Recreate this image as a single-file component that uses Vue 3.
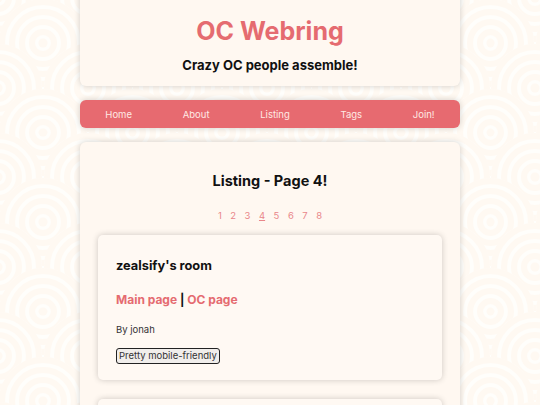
<script setup>
const navLinks = ['Home', 'About', 'Listing', 'Tags', 'Join!']
const pages = [1, 2, 3, 4, 5, 6, 7, 8]
</script>

<template>
  <div class="page">
    <header class="card top-card">
      <h1>OC Webring</h1>
      <h2>Crazy OC people assemble!</h2>
    </header>

    <nav class="nav">
      <a v-for="link in navLinks" :key="link" href="#">{{ link }}</a>
    </nav>

    <main class="card listing">
      <h2 class="listing-title">Listing - Page 4!</h2>
      <div class="pager">
        <a v-for="p in pages" :key="p" href="#" :class="{ current: p === 4 }">{{ p }}</a>
      </div>

      <section class="site">
        <h3>zealsify's room</h3>
        <p class="links"><a href="#">Main page</a> | <a href="#">OC page</a></p>
        <p class="owner">By jonah</p>
        <span class="tag">Pretty mobile-friendly</span>
      </section>

      <section class="site"></section>
    </main>
  </div>
</template>

<style>
html,
body {
  margin: 0;
  height: 405px;
  overflow: hidden;
}

body {
  background-color: #fffefb;
  background-size: 89.5px 89.5px;
  background-position: -1.75px -1.75px;
  background-image: url("data:image/svg+xml,%3Csvg xmlns='http://www.w3.org/2000/svg' xmlns:xlink='http://www.w3.org/1999/xlink' viewBox='0 0 90 90'%3E%3Cdefs%3E%3Cg id='c'%3E%3Ccircle r='44' fill='%23fffefb'/%3E%3Ccircle r='41' fill='none' stroke='%23fff9f2' stroke-width='6'/%3E%3Ccircle r='31' fill='none' stroke='%23fff9f2' stroke-width='6'/%3E%3Ccircle r='21' fill='none' stroke='%23fff9f2' stroke-width='6'/%3E%3Ccircle r='11' fill='none' stroke='%23fff9f2' stroke-width='6'/%3E%3Ccircle r='4.5' fill='%23fff9f2'/%3E%3C/g%3E%3C/defs%3E%3Cuse xlink:href='%23c' x='0' y='0'/%3E%3Cuse xlink:href='%23c' x='90' y='0'/%3E%3Cuse xlink:href='%23c' x='45' y='45'/%3E%3Cuse xlink:href='%23c' x='0' y='90'/%3E%3Cuse xlink:href='%23c' x='90' y='90'/%3E%3C/svg%3E");
}
</style>

<style scoped>
.page {
  width: 380px;
  margin: -12px auto 0;
  font-family: "Inter", "Liberation Sans", sans-serif;
  color: #111;
}

.card {
  background: #fff8f1;
  border-radius: 6px;
  box-shadow: 0 0 6px rgba(0, 0, 0, 0.18);
}

.top-card {
  padding: 27px 0 12px;
  text-align: center;
}

h1 {
  margin: 0;
  font-size: 25px;
  line-height: 32px;
  font-weight: 700;
  color: #e56b70;
}

.top-card h2 {
  margin: 9px 0 0;
  font-size: 13px;
  line-height: 18px;
  font-weight: 700;
}

.nav {
  display: flex;
  justify-content: space-around;
  align-items: center;
  height: 28px;
  margin: 14px 0;
  background: #e76a70;
  border-radius: 6px;
  box-shadow: 0 0 6px rgba(0, 0, 0, 0.18);
}

.nav a {
  font-size: 9.5px;
  color: #ffe9e4;
  text-decoration: none;
}

.listing {
  padding: 30px 18px 0;
  height: 300px;
}

.listing-title {
  margin: 0;
  font-size: 14.5px;
  line-height: 18px;
  font-weight: 700;
  text-align: center;
}

.pager {
  display: flex;
  justify-content: center;
  gap: 8.5px;
  margin: 20px 0 13px;
  font-size: 9.5px;
  line-height: 12px;
}

.pager a {
  color: #e9868a;
  text-decoration: none;
}

.pager a.current {
  text-decoration: underline;
}

.site {
  height: 145px;
  margin-bottom: 19px;
  padding: 23px 18px 0;
  box-sizing: border-box;
  background: #fff9f3;
  border-radius: 5px;
  box-shadow: 0 0 6px rgba(0, 0, 0, 0.2);
}

.site h3 {
  margin: 0;
  font-size: 12.8px;
  line-height: 16px;
  font-weight: 700;
}

.links {
  margin: 18px 0 0;
  font-size: 12px;
  line-height: 16px;
  font-weight: 700;
}

.links a {
  color: #e56b70;
  text-decoration: none;
}

.owner {
  margin: 15px 0 0;
  font-size: 9.5px;
  line-height: 14px;
  color: #333;
}

.tag {
  display: inline-block;
  margin-top: 11px;
  padding: 0 2px;
  font-size: 9.5px;
  line-height: 14px;
  color: #333;
  background: #f1eeeb;
  border: 1px solid #222;
  border-radius: 3px;
}
</style>
